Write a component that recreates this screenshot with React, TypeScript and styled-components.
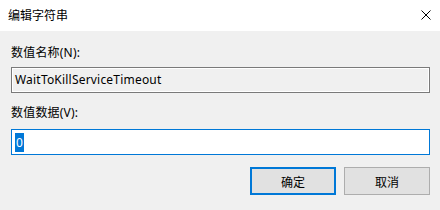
import React from 'react';
import styled, { createGlobalStyle } from 'styled-components';

const GlobalStyle = createGlobalStyle`
  html, body {
    margin: 0;
    padding: 0;
    background: #f0f0f0;
  }
  * {
    box-sizing: border-box;
  }
`;

const Dialog = styled.div`
  width: 440px;
  height: 210px;
  background: #f0f0f0;
  font-family: "Noto Sans", "Noto Sans CJK SC", sans-serif;
  font-size: 12px;
  color: #000;
  display: flex;
  flex-direction: column;
  overflow: hidden;
`;

const TitleBar = styled.div`
  height: 31px;
  background: #fff;
  display: flex;
  align-items: center;
  justify-content: space-between;
  padding: 0 9px 1px 8px;
`;

const Title = styled.span`
  font-family: "Noto Sans CJK SC", sans-serif;
  font-size: 12px;
  line-height: 16px;
`;

const CloseIcon = () => (
  <svg width="10" height="10" viewBox="0 0 10 10">
    <path d="M0.5 0.5 L9.5 9.5 M9.5 0.5 L0.5 9.5" stroke="#000" strokeWidth="1" fill="none" />
  </svg>
);

const Body = styled.div`
  display: flex;
  flex-direction: column;
  padding: 0 10px 0 11px;
`;

const Label = styled.div<{ $top: number }>`
  margin-top: ${p => p.$top}px;
  line-height: 16px;
  letter-spacing: 0.2px;
`;

const TextBox = styled.div<{ $focused?: boolean; $top: number }>`
  margin-top: ${p => p.$top}px;
  height: 26px;
  display: flex;
  align-items: center;
  padding-left: 3px;
  border: 1px solid ${p => (p.$focused ? '#0078d7' : '#7a7a7a')};
  background: ${p => (p.$focused ? '#fff' : '#f0f0f0')};
  box-shadow: ${p => (p.$focused ? 'none' : 'inset 0 0 0 1px #fff')};
  line-height: 16px;
  letter-spacing: 0.2px;
`;

const Selected = styled.span`
  background: #0078d7;
  color: #fff;
  padding: 1px 1px;
  line-height: 17px;
`;

const ButtonRow = styled.div`
  margin-top: 12px;
  display: flex;
  justify-content: flex-end;
  gap: 8px;
`;

const Button = styled.div<{ $default?: boolean }>`
  width: 86px;
  height: 28px;
  display: flex;
  align-items: center;
  justify-content: center;
  background: #e1e1e1;
  border: ${p => (p.$default ? '2px solid #0078d7' : '1px solid #adadad')};
  font-family: "Noto Sans CJK SC", sans-serif;
  font-size: 12px;
`;

export default function App() {
  return (
    <>
      <GlobalStyle />
      <Dialog>
        <TitleBar>
          <Title>编辑字符串</Title>
          <CloseIcon />
        </TitleBar>
        <Body>
          <Label $top={14}>数值名称(N):</Label>
          <TextBox $top={6}>WaitToKillServiceTimeout</TextBox>
          <Label $top={12}>数值数据(V):</Label>
          <TextBox $top={8} $focused>
            <Selected>0</Selected>
          </TextBox>
          <ButtonRow>
            <Button $default>确定</Button>
            <Button>取消</Button>
          </ButtonRow>
        </Body>
      </Dialog>
    </>
  );
}
